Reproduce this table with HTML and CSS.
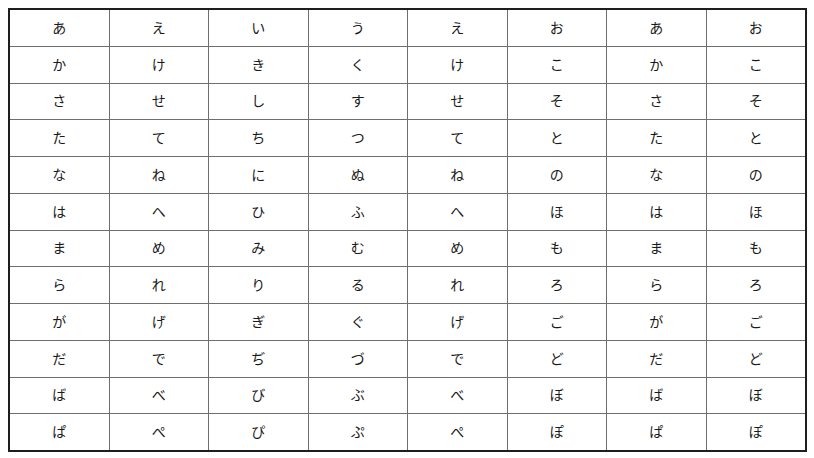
FILE: index.html
```html
<!DOCTYPE html>
<html lang="ja">
<head>
<meta charset="utf-8">
<link rel="stylesheet" href="styles.css">
</head>
<body>
<div class="kana-grid">
<div class="cell">あ</div><div class="cell">え</div><div class="cell">い</div><div class="cell">う</div><div class="cell">え</div><div class="cell">お</div><div class="cell">あ</div><div class="cell">お</div>
<div class="cell">か</div><div class="cell">け</div><div class="cell">き</div><div class="cell">く</div><div class="cell">け</div><div class="cell">こ</div><div class="cell">か</div><div class="cell">こ</div>
<div class="cell">さ</div><div class="cell">せ</div><div class="cell">し</div><div class="cell">す</div><div class="cell">せ</div><div class="cell">そ</div><div class="cell">さ</div><div class="cell">そ</div>
<div class="cell">た</div><div class="cell">て</div><div class="cell">ち</div><div class="cell">つ</div><div class="cell">て</div><div class="cell">と</div><div class="cell">た</div><div class="cell">と</div>
<div class="cell">な</div><div class="cell">ね</div><div class="cell">に</div><div class="cell">ぬ</div><div class="cell">ね</div><div class="cell">の</div><div class="cell">な</div><div class="cell">の</div>
<div class="cell">は</div><div class="cell">へ</div><div class="cell">ひ</div><div class="cell">ふ</div><div class="cell">へ</div><div class="cell">ほ</div><div class="cell">は</div><div class="cell">ほ</div>
<div class="cell">ま</div><div class="cell">め</div><div class="cell">み</div><div class="cell">む</div><div class="cell">め</div><div class="cell">も</div><div class="cell">ま</div><div class="cell">も</div>
<div class="cell">ら</div><div class="cell">れ</div><div class="cell">り</div><div class="cell">る</div><div class="cell">れ</div><div class="cell">ろ</div><div class="cell">ら</div><div class="cell">ろ</div>
<div class="cell">が</div><div class="cell">げ</div><div class="cell">ぎ</div><div class="cell">ぐ</div><div class="cell">げ</div><div class="cell">ご</div><div class="cell">が</div><div class="cell">ご</div>
<div class="cell">だ</div><div class="cell">で</div><div class="cell">ぢ</div><div class="cell">づ</div><div class="cell">で</div><div class="cell">ど</div><div class="cell">だ</div><div class="cell">ど</div>
<div class="cell">ば</div><div class="cell">べ</div><div class="cell">び</div><div class="cell">ぶ</div><div class="cell">べ</div><div class="cell">ぼ</div><div class="cell">ば</div><div class="cell">ぼ</div>
<div class="cell">ぱ</div><div class="cell">ぺ</div><div class="cell">ぴ</div><div class="cell">ぷ</div><div class="cell">ぺ</div><div class="cell">ぽ</div><div class="cell">ぱ</div><div class="cell">ぽ</div>
</div>
</body>
</html>
```
FILE: styles.css
```css
html, body {
  margin: 0;
  padding: 0;
  background: #ffffff;
}
body {
  padding: 8px 0 0 8px;
  font-family: "Noto Sans CJK JP", "Noto Sans", sans-serif;
}
.kana-grid {
  box-sizing: border-box;
  width: 799px;
  height: 444px;
  border: 2px solid #1e1e1e;
  background: #6e6e6e;
  display: grid;
  grid-template-columns: repeat(8, 1fr);
  grid-template-rows: repeat(12, 1fr);
  gap: 1px;
}
.cell {
  background: #ffffff;
  display: flex;
  align-items: center;
  justify-content: center;
  font-size: 14px;
  color: #1a1a1a;
  line-height: 1;
  padding-bottom: 2px;
}
```
